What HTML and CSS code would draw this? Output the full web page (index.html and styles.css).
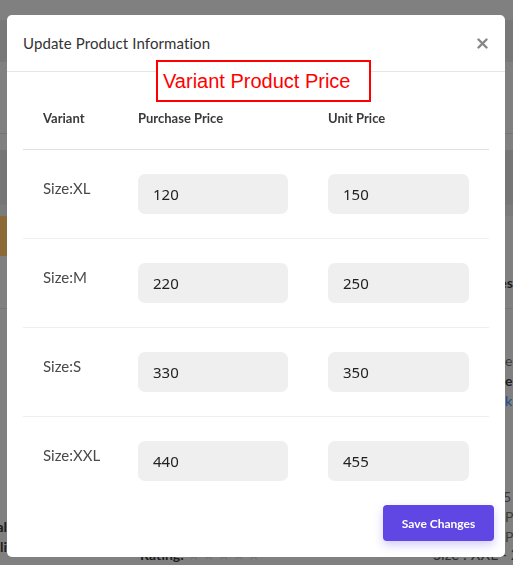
FILE: index.html
```html
<!DOCTYPE html>
<html lang="en">
<head>
<meta charset="utf-8">
<title>Update Product Information</title>
<link rel="stylesheet" href="styles.css">
</head>
<body>
<div class="backdrop">
  <div class="band b-top"></div>
  <div class="band b-nav"></div>
  <div class="band b-sub"></div>
  <div class="band b-gap"></div>
  <div class="band b-head"></div>
  <div class="band b-gap2"></div>
  <div class="band b-ban"><span class="chip"></span></div>
  <div class="band b-mid"><span class="rfrag dark">es</span></div>
  <div class="lower">
    <div class="lcol">
      <div class="lfrag dark"><span>Total</span></div>
      <div class="lfrag dark"><span>Emaili</span></div>
    </div>
    <div class="mcol">
      <div class="rating-row">
        <span class="rating"><b>Rating:</b> <span class="stars">★ ★ ★ ★ ★</span></span>
        <span class="size-txt">Size : XXL - 24</span>
      </div>
    </div>
    <div class="rcol">
      <div class="rline gray first">ec</div>
      <div class="rline dark">e:</div>
      <div class="rline blue">k</div>
      <div class="rline gray gap">5 <span class="orange">I</span></div>
      <div class="rline gray">P</div>
      <div class="rline gray">P</div>
    </div>
  </div>
</div>

<div class="modal">
  <div class="modal-header">
    <h5 class="modal-title">Update Product Information</h5>
    <button class="close" type="button" aria-label="Close">
      <svg width="11" height="11" viewBox="0 0 11 11"><path d="M1.5 1.5L9.5 9.5M9.5 1.5L1.5 9.5" stroke="#878787" stroke-width="2.4" stroke-linecap="round"/></svg>
    </button>
  </div>
  <div class="annot">Variant Product Price</div>
  <div class="modal-body">
    <div class="vtable">
      <div class="vrow vhead">
        <div class="th">Variant</div>
        <div class="th">Purchase Price</div>
        <div class="th">Unit Price</div>
      </div>
      <div class="vrow">
        <div class="vlabel">Size:XL</div>
        <div class="cell"><input class="price" type="text" value="120"></div>
        <div class="cell"><input class="price" type="text" value="150"></div>
      </div>
      <div class="vrow">
        <div class="vlabel">Size:M</div>
        <div class="cell"><input class="price" type="text" value="220"></div>
        <div class="cell"><input class="price" type="text" value="250"></div>
      </div>
      <div class="vrow">
        <div class="vlabel">Size:S</div>
        <div class="cell"><input class="price" type="text" value="330"></div>
        <div class="cell"><input class="price" type="text" value="350"></div>
      </div>
      <div class="vrow last">
        <div class="vlabel">Size:XXL</div>
        <div class="cell"><input class="price" type="text" value="440"></div>
        <div class="cell"><input class="price" type="text" value="455"></div>
      </div>
    </div>
  </div>
  <div class="modal-footer">
    <button class="save" type="button">Save Changes</button>
  </div>
</div>
</body>
</html>
```

FILE: styles.css
```css
html, body {
  margin: 0;
  height: 100%;
  overflow: hidden;
}
body {
  background: #808080;
  font-family: Lato, "Noto Sans", sans-serif;
}

/* dimmed page behind the modal */
.backdrop {
  height: 565px;
  display: flex;
  flex-direction: column;
  overflow: hidden;
  font-size: 14px;
}
.band { flex: none; box-sizing: border-box; }
.b-top { height: 20px; }
.b-nav { height: 42px; background: #787878; }
.b-sub { height: 72px; border-bottom: 1px solid #747474; }
.b-gap { height: 16px; }
.b-head { height: 55px; background: #767676; }
.b-gap2 { height: 11px; background: #7b7b7b; }
.b-ban { height: 40px; display: flex; }
.chip { width: 8px; background: #8b6a37; }
.b-mid {
  height: 53px;
  border-bottom: 1px solid #767676;
  display: flex;
  justify-content: flex-end;
  padding-top: 17px;
}
.rfrag { line-height: 20px; font-weight: 700; }
.dark { color: #1d1d1d; font-weight: 700; }
.gray { color: #3b3b3b; }
.blue { color: #1d4a8c; }
.orange { color: #8c6a2c; }

.lower {
  flex: 1;
  display: grid;
  grid-template-columns: 7px minmax(0, 1fr) 8px;
  line-height: 20px;
  white-space: nowrap;
}
.lcol {
  display: flex;
  flex-direction: column;
  justify-content: flex-end;
  padding-bottom: 8px;
}
.lfrag { display: flex; justify-content: flex-end; }
.mcol {
  display: flex;
  flex-direction: column;
  justify-content: flex-end;
  min-width: 0;
}
.rating-row { display: flex; }
.rating {
  flex: none;
  width: 426px;
  padding-left: 133px;
  color: #1d1d1d;
  box-sizing: border-box;
}
.stars { color: #727272; font-size: 15px; letter-spacing: -1px; }
.size-txt { flex: none; color: #2e2e2e; font-size: 15px; }
.rcol { display: flex; flex-direction: column; }
.rline.first { margin-top: 42px; }
.rline.gap { margin-top: 76px; margin-left: -2px; }

/* modal */
.modal {
  position: fixed;
  top: 15px;
  left: 7px;
  width: 498px;
  height: 542px;
  background: #fff;
  border-radius: 5px;
  display: flex;
  flex-direction: column;
  box-sizing: border-box;
}
.modal-header {
  height: 57px;
  box-sizing: border-box;
  border-bottom: 1px solid #e6e6e6;
  display: flex;
  align-items: center;
  justify-content: space-between;
  padding: 0 17px 0 16px;
}
.modal-title {
  margin: 0;
  font-size: 15px;
  font-weight: 400;
  color: #333;
  letter-spacing: 0.1px;
}
.close {
  border: 0;
  background: none;
  padding: 0;
  width: 11px;
  height: 11px;
  display: flex;
  cursor: pointer;
}

.annot {
  position: absolute;
  left: 149px;
  top: 45px;
  width: 215px;
  height: 42px;
  box-sizing: border-box;
  border: 2px solid #ff0000;
  padding-left: 5px;
  font-family: "Liberation Sans", Arial, sans-serif;
  font-size: 20px;
  line-height: 38px;
  color: #ff0000;
  background: #fff;
}

.modal-body {
  padding: 16px 16px 0;
}
.vrow {
  display: grid;
  grid-template-columns: 95px 190px 181px;
  border-bottom: 1px solid #efefef;
}
.vrow.last { border-bottom: 0; }
.vhead { border-bottom-color: #e2e2e2; }
.th {
  padding: 20px 20px;
  font-size: 13px;
  line-height: 21px;
  font-weight: 700;
  color: #3a3a3a;
}
.vlabel {
  padding: 28px 0 0 20px;
  font-size: 15px;
  line-height: 21px;
  color: #4a4a4a;
  white-space: nowrap;
}
.cell { padding: 24px 20px; }
.price {
  display: block;
  width: 100%;
  height: 40px;
  box-sizing: border-box;
  border: 0;
  border-radius: 7px;
  background: #efefef;
  padding: 0 15px;
  font-family: "Noto Sans", "Open Sans", sans-serif;
  font-size: 15px;
  color: #222;
  outline: none;
}

.modal-footer {
  display: flex;
  justify-content: flex-end;
  padding: 0 11px 16px;
}
.save {
  height: 36px;
  width: 111px;
  border: 0;
  border-radius: 4px;
  background: #6046e2;
  color: #fff;
  font-family: Lato, sans-serif;
  font-weight: 700;
  font-size: 12px;
  box-shadow: 0 4px 10px rgba(96, 70, 226, 0.28);
  cursor: pointer;
}
```
